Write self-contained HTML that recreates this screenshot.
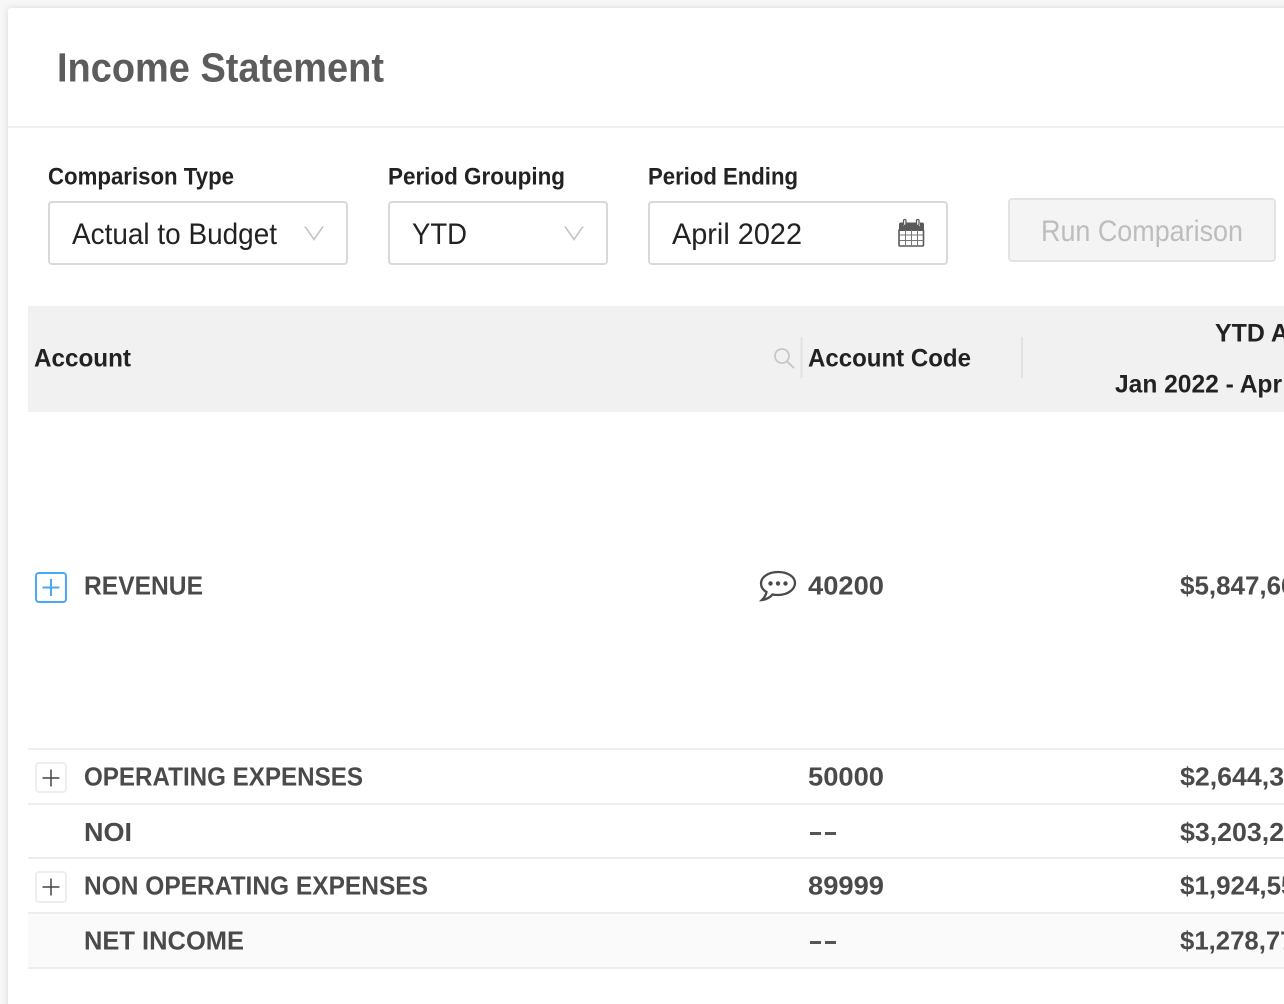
<!DOCTYPE html>
<html lang="en">
<head>
<meta charset="utf-8">
<title>Income Statement</title>
<style>
html,body{margin:0;padding:0;width:1284px;height:1004px;overflow:hidden;background:#f7f7f7}
#wrap{position:absolute;left:0;top:0;width:1284px;height:1004px;overflow:hidden}
#card{position:absolute;left:8px;top:8px;width:1300px;height:1020px;background:#fff;border-radius:3px;box-shadow:0 0 8px rgba(0,0,0,.13)}
svg{position:absolute;left:0;top:0}
text{font-family:"Liberation Sans",Arial,sans-serif}
.b{font-weight:700}
.h{font-weight:700;font-size:25px;fill:#222}
.l{font-weight:700;font-size:24px;fill:#222}
.s{font-size:29.5px;fill:#222}
.r{font-weight:700;font-size:26px;fill:#4a4a4a}
</style>
</head>
<body>
<div id="wrap">
<div id="card"></div>
<svg width="1284" height="1004" viewBox="0 0 1284 1004">
  <rect x="8" y="126" width="1276" height="2" fill="#f0f0f0"/>
  <text class="b" x="57" y="81.500" font-size="41" fill="#5c5c5c" textLength="327" lengthAdjust="spacingAndGlyphs">Income Statement</text>

  <text class="l" x="48" y="184.500" textLength="186" lengthAdjust="spacingAndGlyphs">Comparison Type</text>
  <text class="l" x="388" y="184.500" textLength="177" lengthAdjust="spacingAndGlyphs">Period Grouping</text>
  <text class="l" x="648" y="184.500" textLength="150" lengthAdjust="spacingAndGlyphs">Period Ending</text>

  <rect x="49" y="202" width="298" height="62" rx="3" fill="#fff" stroke="#d9d9d9" stroke-width="2"/>
  <text class="s" x="72" y="244" textLength="205" lengthAdjust="spacingAndGlyphs">Actual to Budget</text>
  <path d="M305 226.500L314 239.500L323 226.500" fill="none" stroke="#c4c4c4" stroke-width="1.600"/>

  <rect x="389" y="202" width="218" height="62" rx="3" fill="#fff" stroke="#d9d9d9" stroke-width="2"/>
  <text class="s" x="412" y="244" textLength="55" lengthAdjust="spacingAndGlyphs">YTD</text>
  <path d="M565 226.500L574 239.500L583 226.500" fill="none" stroke="#c4c4c4" stroke-width="1.600"/>

  <rect x="649" y="202" width="298" height="62" rx="3" fill="#fff" stroke="#d9d9d9" stroke-width="2"/>
  <text class="s" x="672" y="244" textLength="130" lengthAdjust="spacingAndGlyphs">April 2022</text>

  <g>
    <path d="M899 224.500a2 2 0 0 1 2-2h2v3.500h3v-3.500h11v3.500h3v-3.500h2a2 2 0 0 1 2 2V231H899z" fill="#5a5a5a"/>
    <rect x="903.500" y="219.500" width="2.500" height="6" rx="1.200" fill="none" stroke="#5a5a5a" stroke-width="1.300"/>
    <rect x="916.500" y="219.500" width="2.500" height="6" rx="1.200" fill="none" stroke="#5a5a5a" stroke-width="1.300"/>
    <rect x="899" y="229.500" width="24.500" height="16.500" rx="1" fill="none" stroke="#5a5a5a" stroke-width="1.600"/>
    <path d="M905.500 230v16M911.500 230v16M917.500 230v16M899.500 235h24M899.500 240.500h24" fill="none" stroke="#777" stroke-width="1"/>
  </g>

  <rect x="1009" y="199" width="266" height="62" rx="3" fill="#f4f4f4" stroke="#e3e3e3" stroke-width="2"/>
  <text x="1041" y="241" font-size="29.500" fill="#bdbdbd" textLength="202" lengthAdjust="spacingAndGlyphs">Run Comparison</text>

  <rect x="28" y="306" width="1256" height="106" fill="#f1f1f1"/>
  <text class="h" x="34" y="366.500" textLength="97" lengthAdjust="spacingAndGlyphs">Account</text>
  <circle cx="782" cy="356" r="7" fill="none" stroke="#c8c8c8" stroke-width="1.800"/>
  <path d="M787 361.500L794 368" fill="none" stroke="#c8c8c8" stroke-width="2"/>
  <rect x="800.500" y="337" width="2" height="41" fill="#e2e2e2"/>
  <text class="h" x="808" y="366.500" textLength="163" lengthAdjust="spacingAndGlyphs">Account Code</text>
  <rect x="1021" y="337" width="2" height="41" fill="#e2e2e2"/>
  <text class="h" x="1215" y="341.500" textLength="132" lengthAdjust="spacingAndGlyphs">YTD Actual</text>
  <text class="h" x="1115" y="392.500" textLength="167" lengthAdjust="spacingAndGlyphs">Jan 2022 - Apr</text>

  <rect x="36" y="573" width="30" height="29" rx="3" fill="#fff" stroke="#4aa8f5" stroke-width="2"/>
  <path d="M42.500 587.500h17M51 579v17" fill="none" stroke="#4aa8f5" stroke-width="2"/>
  <text class="r" x="84" y="594.500" textLength="119" lengthAdjust="spacingAndGlyphs">REVENUE</text>
  <path d="M778 572c-9.500 0-17 5-17 11.500 0 3.500 2 6.500 5.500 8.500-.5 3-2.500 6-4.500 8 4-.5 8-2.500 10.500-5.500 1.800.4 3.600.5 5.500.5 9.500 0 17-5.500 17-12S787.500 572 778 572z" fill="none" stroke="#4a4a4a" stroke-width="2.300"/>
  <circle cx="770.500" cy="583.500" r="2.200" fill="#4a4a4a"/>
  <circle cx="778" cy="583.500" r="2.200" fill="#4a4a4a"/>
  <circle cx="785.500" cy="583.500" r="2.200" fill="#4a4a4a"/>
  <text class="r" x="808" y="594.500" textLength="76" lengthAdjust="spacingAndGlyphs">40200</text>
  <text class="r" x="1180" y="594.500" textLength="115.500" lengthAdjust="spacingAndGlyphs">$5,847,66</text>

  <rect x="28" y="748" width="1256" height="2" fill="#eee"/>
  <rect x="36" y="763" width="30" height="29" rx="3" fill="#fff" stroke="#eee" stroke-width="2"/>
  <path d="M42.500 778h17M51 769.500v17" fill="none" stroke="#444" stroke-width="1.500"/>
  <text class="r" x="84" y="785.500" textLength="279" lengthAdjust="spacingAndGlyphs">OPERATING EXPENSES</text>
  <text class="r" x="808" y="785.500" textLength="76" lengthAdjust="spacingAndGlyphs">50000</text>
  <text class="r" x="1180" y="785.500" textLength="119" lengthAdjust="spacingAndGlyphs">$2,644,33</text>

  <rect x="28" y="803" width="1256" height="2" fill="#eee"/>
  <text class="r" x="84" y="841" textLength="48" lengthAdjust="spacingAndGlyphs">NOI</text>
  <rect x="810" y="832" width="11" height="3" fill="#555"/>
  <rect x="825" y="832" width="11" height="3" fill="#555"/>
  <text class="r" x="1180" y="841" textLength="119" lengthAdjust="spacingAndGlyphs">$3,203,22</text>

  <rect x="28" y="857" width="1256" height="2" fill="#eee"/>
  <rect x="36" y="872" width="30" height="30" rx="3" fill="#fff" stroke="#eee" stroke-width="2"/>
  <path d="M42.500 887h17M51 878.500v17" fill="none" stroke="#444" stroke-width="1.500"/>
  <text class="r" x="84" y="894.500" textLength="344" lengthAdjust="spacingAndGlyphs">NON OPERATING EXPENSES</text>
  <text class="r" x="808" y="894.500" textLength="76" lengthAdjust="spacingAndGlyphs">89999</text>
  <text class="r" x="1180" y="894.500" textLength="115.500" lengthAdjust="spacingAndGlyphs">$1,924,55</text>

  <rect x="28" y="914" width="1256" height="53" fill="#fafafa"/>
  <rect x="28" y="912" width="1256" height="2" fill="#eee"/>
  <text class="r" x="84" y="949.500" textLength="160" lengthAdjust="spacingAndGlyphs">NET INCOME</text>
  <rect x="810" y="941" width="11" height="3" fill="#555"/>
  <rect x="825" y="941" width="11" height="3" fill="#555"/>
  <text class="r" x="1180" y="949.500" textLength="114.500" lengthAdjust="spacingAndGlyphs">$1,278,77</text>
  <rect x="28" y="967" width="1256" height="2" fill="#eee"/>
</svg>
</div>
</body>
</html>
